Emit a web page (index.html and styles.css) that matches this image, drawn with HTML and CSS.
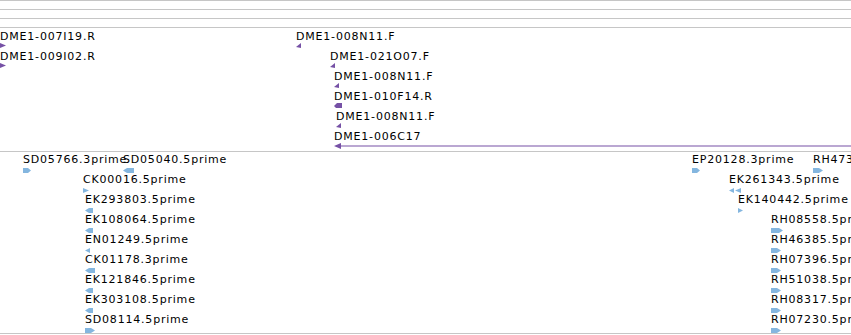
FILE: index.html
```html
<!DOCTYPE html>
<html>
<head>
<meta charset="utf-8">
<link rel="stylesheet" href="styles.css">
</head>
<body>
<div class="view">
  <div class="ruler">
    <div class="band"></div>
    <div class="band"></div>
    <div class="band"></div>
  </div>

  <div class="track t1">
    <div class="feat" style="left:0px;top:2px"><span class="lbl">DME1-007I19.R</span><svg class="g" width="6" height="5"><polygon points="0,0 6,2.5 0,5"/></svg></div>
    <div class="feat" style="left:0px;top:22px"><span class="lbl">DME1-009I02.R</span><svg class="g" width="6" height="5"><polygon points="0,0 6,2.5 0,5"/></svg></div>
    <div class="feat" style="left:296px;top:2px"><span class="lbl">DME1-008N11.F</span><svg class="g" width="5" height="5"><polygon points="5,0 5,5 0,4"/></svg></div>
    <div class="feat" style="left:330px;top:22px"><span class="lbl">DME1-021O07.F</span><svg class="g" width="5" height="5"><polygon points="5,0 5,5 0,4"/></svg></div>
    <div class="feat" style="left:334px;top:42px"><span class="lbl">DME1-008N11.F</span><svg class="g" width="5" height="5"><polygon points="5,0 5,5 0,4"/></svg></div>
    <div class="feat" style="left:334px;top:62px"><span class="lbl">DME1-010F14.R</span><svg class="g" width="8" height="5"><polygon points="0,3 3,0 8,0 8,5 2,5"/></svg></div>
    <div class="feat" style="left:336px;top:82px"><span class="lbl">DME1-008N11.F</span><svg class="g" width="5" height="5"><polygon points="5,0 5,5 0,4"/></svg></div>
    <div class="feat" style="left:334px;top:102px"><span class="lbl">DME1-006C17</span><svg class="g" width="517" height="6"><polygon points="0,3 7,0 7,6"/><rect x="6" y="2.5" width="511" height="1"/></svg></div>
  </div>

  <div class="track t2">
    <div class="feat" style="left:23px;top:1px"><span class="lbl">SD05766.3prime</span><svg class="g gx1" width="8" height="5"><polygon points="0,0 5,0 8,2.5 5,5 0,5"/></svg></div>
    <div class="feat" style="left:123px;top:1px"><span class="lbl">SD05040.5prime</span><svg class="g gx1" width="11" height="5"><polygon points="0,2.5 4,0 11,0 11,5 4,5"/></svg></div>
    <div class="feat" style="left:83px;top:21px"><span class="lbl">CK00016.5prime</span><svg class="g" width="6" height="5"><polygon points="0,0 6,2.5 0,5"/></svg></div>
    <div class="feat" style="left:85px;top:41px"><span class="lbl">EK293803.5prime</span><svg class="g" width="8" height="5"><polygon points="0,2.5 4,0 8,0 8,5 4,5"/></svg></div>
    <div class="feat" style="left:85px;top:61px"><span class="lbl">EK108064.5prime</span><svg class="g" width="8" height="5"><polygon points="0,2.5 4,0 8,0 8,5 4,5"/></svg></div>
    <div class="feat" style="left:85px;top:81px"><span class="lbl">EN01249.5prime</span><svg class="g" width="5" height="5"><polygon points="0,2.5 5,0 5,5"/></svg></div>
    <div class="feat" style="left:85px;top:101px"><span class="lbl">CK01178.3prime</span><svg class="g" width="10" height="5"><polygon points="0,2.5 4,0 10,0 10,5 4,5"/></svg></div>
    <div class="feat" style="left:85px;top:121px"><span class="lbl">EK121846.5prime</span><svg class="g" width="8" height="5"><polygon points="0,2.5 4,0 8,0 8,5 4,5"/></svg></div>
    <div class="feat" style="left:85px;top:141px"><span class="lbl">EK303108.5prime</span><svg class="g" width="8" height="5"><polygon points="0,2.5 4,0 8,0 8,5 4,5"/></svg></div>
    <div class="feat" style="left:85px;top:161px"><span class="lbl">SD08114.5prime</span><svg class="g" width="10" height="5"><polygon points="0,0 6,0 10,2.5 6,5 0,5"/></svg></div>

    <div class="feat" style="left:692px;top:1px"><span class="lbl">EP20128.3prime</span><svg class="g gx1" width="8" height="5"><polygon points="0,0 5,0 8,2.5 5,5 0,5"/></svg></div>
    <div class="feat" style="left:813px;top:1px"><span class="lbl">RH47391.5prime</span><svg class="g gx1" width="10" height="5"><polygon points="0,0 6,0 10,2.5 6,5 0,5"/></svg></div>
    <div class="feat" style="left:729px;top:21px"><span class="lbl">EK261343.5prime</span><svg class="g" width="12" height="5"><polygon points="0,2.5 5,0 5,5"/><polygon points="6,2.5 12,0 12,5"/></svg></div>
    <div class="feat" style="left:738px;top:41px"><span class="lbl">EK140442.5prime</span><svg class="g" width="5" height="5"><polygon points="0,0 5,2.5 0,5"/></svg></div>
    <div class="feat" style="left:771px;top:61px"><span class="lbl">RH08558.5prime</span><svg class="g" width="12" height="5"><polygon points="0,0 8,0 12,2.5 8,5 0,5"/></svg></div>
    <div class="feat" style="left:771px;top:81px"><span class="lbl">RH46385.5prime</span><svg class="g" width="10" height="5"><polygon points="0,0 6,0 10,2.5 6,5 0,5"/></svg></div>
    <div class="feat" style="left:771px;top:101px"><span class="lbl">RH07396.5prime</span><svg class="g" width="10" height="5"><polygon points="0,0 6,0 10,2.5 6,5 0,5"/></svg></div>
    <div class="feat" style="left:771px;top:121px"><span class="lbl">RH51038.5prime</span><svg class="g" width="10" height="5"><polygon points="0,0 6,0 10,2.5 6,5 0,5"/></svg></div>
    <div class="feat" style="left:771px;top:141px"><span class="lbl">RH08317.5prime</span><svg class="g" width="10" height="5"><polygon points="0,0 6,0 10,2.5 6,5 0,5"/></svg></div>
    <div class="feat" style="left:771px;top:161px"><span class="lbl">RH07230.5prime</span><svg class="g" width="10" height="5"><polygon points="0,0 6,0 10,2.5 6,5 0,5"/></svg></div>
  </div>
</div>
</body>
</html>
```

FILE: styles.css
```css
html, body {
  margin: 0;
  padding: 0;
  background: #ffffff;
  overflow: hidden;
}

.view {
  width: 851px;
  height: 335px;
  overflow: hidden;
  font-family: "DejaVu Sans", sans-serif;
  color: #000;
}

.ruler {
  display: flex;
  flex-direction: column;
  border-top: 1px solid #c6c6c6;
}

.band {
  height: 8px;
  border-bottom: 1px solid #c6c6c6;
}

.track {
  position: relative;
  overflow: hidden;
  border-bottom: 1px solid #c6c6c6;
}

.t1 {
  height: 123px;
}

.t2 {
  height: 181px;
}

.feat {
  position: absolute;
  display: flex;
  flex-direction: column;
  align-items: flex-start;
}

.lbl {
  font-size: 11px;
  line-height: 13px;
  letter-spacing: 0.8px;
  white-space: nowrap;
}

.g {
  display: block;
}

.t1 .g {
  fill: #7651a6;
  margin-top: 0;
}

.t2 .g {
  fill: #84b6df;
  margin-top: 2px;
}
```
